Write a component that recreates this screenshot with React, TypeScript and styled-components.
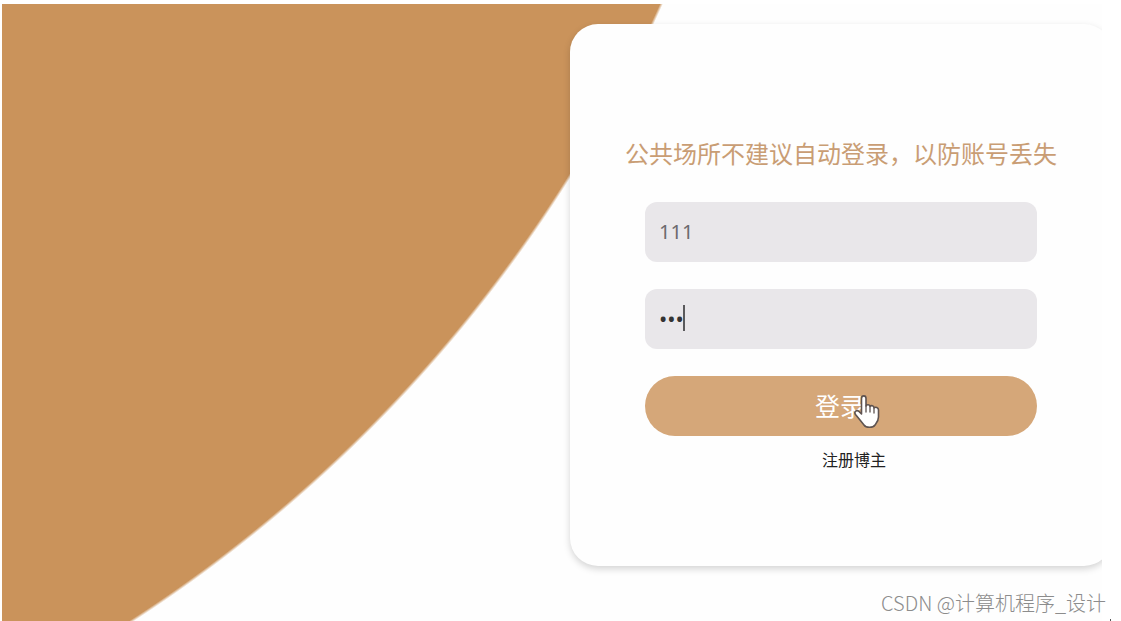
import React, { useState } from "react";
import styled, { createGlobalStyle } from "styled-components";

const GlobalStyle = createGlobalStyle`
  *, *::before, *::after { box-sizing: border-box; }
  body {
    margin: 0;
    background: #ffffff;
    font-family: "Noto Sans", "Noto Sans CJK SC", sans-serif;
  }
`;

const Page = styled.div`
  position: relative;
  display: flex;
  min-height: 100vh;
  padding: 4px 19px 0 2px;

  &::after {
    content: "";
    position: absolute;
    right: 10px;
    bottom: 0;
    width: 1px;
    height: 2px;
    background: #555555;
  }
`;

const Stage = styled.main`
  flex: 1;
  display: flex;
  justify-content: flex-end;
  align-items: flex-start;
  padding-top: 20px;
  overflow: hidden;
  background: radial-gradient(
    circle at -646px -585px,
    #ca935b 1429px,
    #fefefe 1432px
  );
`;

const Card = styled.form`
  display: flex;
  flex-direction: column;
  align-items: center;
  flex: none;
  width: 542px;
  min-height: 542px;
  margin-right: -10px;
  padding: 112px 75px 48px;
  border-radius: 28px;
  background: #fefefe;
  box-shadow: 0 3px 7px rgba(0, 0, 0, 0.17);
`;

const Notice = styled.h1`
  margin: 0 0 30px;
  color: #c99d74;
  font-size: 24px;
  font-weight: 400;
  line-height: 36px;
  white-space: nowrap;
`;

const Field = styled.label`
  position: relative;
  display: block;
  width: 100%;
  margin-bottom: 27px;
`;

const TextInput = styled.input<{ $masked?: boolean }>`
  display: block;
  width: 100%;
  height: 60px;
  padding: 0 14px 2px;
  border: 0;
  border-radius: 12px;
  outline: none;
  background: #e9e7ea;
  color: ${(p) => (p.$masked ? "#333333" : "#6c6a6e")};
  font-family: "Noto Sans", sans-serif;
  font-size: ${(p) => (p.$masked ? "22px" : "20px")};
`;

const Caret = styled.span`
  position: absolute;
  top: 16px;
  left: 38px;
  width: 2px;
  height: 26px;
  background: #5a5a5c;
`;

const Submit = styled.button`
  position: relative;
  width: 100%;
  height: 60px;
  padding: 0 2px 2px 0;
  border: 0;
  border-radius: 30px;
  background: #d5a779;
  color: #ffffff;
  font-family: "Noto Sans CJK SC", sans-serif;
  font-size: 25px;
  cursor: pointer;
`;

const Pointer = styled.svg`
  position: absolute;
  top: 18px;
  left: 208px;
  width: 28px;
  height: 35px;
`;

const RegisterLink = styled.a`
  margin: 12px 0 0 26px;
  color: #222222;
  font-size: 16px;
  line-height: 24px;
  text-decoration: none;
`;

const Watermark = styled.footer`
  position: absolute;
  right: 15px;
  bottom: 4px;
  color: #8c8c8c;
  font-family: "Noto Sans CJK SC", sans-serif;
  font-size: 20px;
  font-weight: 300;
  line-height: 28px;
`;

export default function App() {
  const [account, setAccount] = useState("111");
  const [password, setPassword] = useState("111");

  return (
    <>
      <GlobalStyle />
      <Page>
        <Stage>
          <Card onSubmit={(e) => e.preventDefault()}>
            <Notice>公共场所不建议自动登录，以防账号丢失</Notice>
            <Field>
              <TextInput
                type="text"
                aria-label="账号"
                value={account}
                onChange={(e) => setAccount(e.target.value)}
              />
            </Field>
            <Field>
              <TextInput
                $masked
                type="password"
                aria-label="密码"
                value={password}
                onChange={(e) => setPassword(e.target.value)}
              />
              <Caret aria-hidden="true" />
            </Field>
            <Submit type="submit">
              登录
              <Pointer viewBox="0 0 28 35" aria-hidden="true">
                <path
                  d="M8.5 20V4.5C8.5 1 13 1 13 4.500V12C13.500 10 17 10.500 17 12.500C18 11 21 11.500 21 14C22.500 12.500 25.500 13.500 25.500 16V23C25.500 27 23.500 29 22 31C20 34 13 34 11 31L7 26L2.500 20.500C0.500 17.500 4 15.500 6 17.500Z"
                  fill="#ffffff"
                  stroke="#5e5350"
                  strokeWidth="1.6"
                  strokeLinejoin="round"
                />
                <path
                  d="M13 12V18M17 13V18M21 14.500V19"
                  fill="none"
                  stroke="#5e5350"
                  strokeWidth="1.3"
                  strokeLinecap="round"
                />
              </Pointer>
            </Submit>
            <RegisterLink href="#register">注册博主</RegisterLink>
          </Card>
        </Stage>
        <Watermark>CSDN @计算机程序_设计</Watermark>
      </Page>
    </>
  );
}
